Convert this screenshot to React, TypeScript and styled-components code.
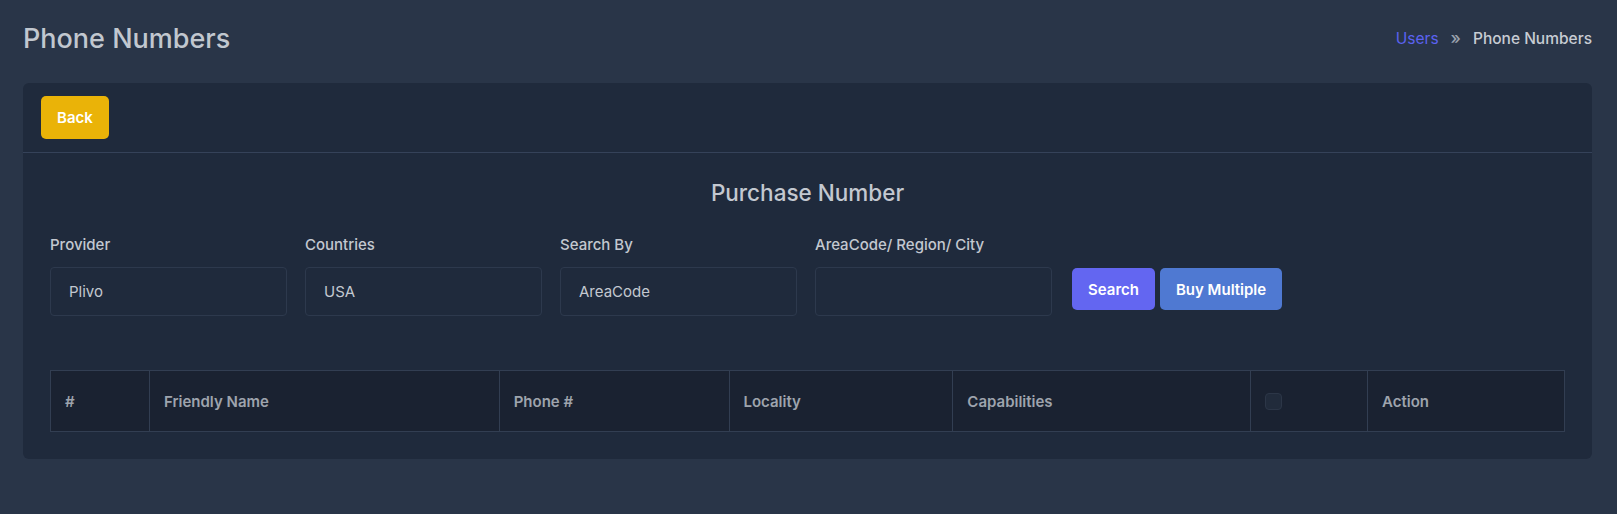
import React from 'react'
import styled, { createGlobalStyle } from 'styled-components'

const GlobalStyle = createGlobalStyle`
  html, body {
    margin: 0;
    padding: 0;
    background: #293548;
  }
  body {
    font-family: 'Inter', 'Noto Sans', sans-serif;
    color: #c3c8d0;
  }
  * {
    box-sizing: border-box;
  }
`

const Page = styled.div`
  min-height: 514px;
  padding: 0 25px 22px 23px;
  background: #293548;
`

const TopBar = styled.div`
  display: flex;
  align-items: center;
  justify-content: space-between;
  height: 83px;
  padding-bottom: 6px;
`

const PageTitle = styled.h1`
  margin: 0;
  font-size: 27px;
  font-weight: 500;
  color: #c1c7cf;
`

const Breadcrumb = styled.div`
  display: flex;
  align-items: center;
  gap: 12px;
  font-size: 15.5px;
  font-weight: 500;
`

const CrumbLink = styled.a`
  color: #5b62f0;
  font-weight: 400;
  text-decoration: none;
`

const CrumbSep = styled.span`
  color: #9aa2ae;
  font-size: 17px;
  line-height: 1;
`

const CrumbCurrent = styled.span`
  color: #c7ccd3;
`

const Card = styled.div`
  background: #1f2a3c;
  border-radius: 6px;
`

const CardHeader = styled.div`
  display: flex;
  align-items: center;
  height: 70px;
  padding: 0 18px;
  border-bottom: 1px solid #354259;
`

const Button = styled.button<{ $bg: string; $h?: number }>`
  height: ${(p) => p.$h ?? 43}px;
  padding: 0 16px;
  border: none;
  border-radius: 5px;
  background: ${(p) => p.$bg};
  color: #ffffff;
  font-family: 'Inter', 'Noto Sans', sans-serif;
  font-size: 15px;
  font-weight: 600;
  cursor: pointer;
`

const CardBody = styled.div`
  padding: 24px 27px 27px 27px;
`

const SectionTitle = styled.h2`
  margin: 0;
  text-align: center;
  font-size: 22.5px;
  font-weight: 500;
  line-height: 32px;
  color: #c3c8d0;
`

const FormRow = styled.div`
  display: flex;
  gap: 18px;
  margin-top: 26px;
`

const Field = styled.div`
  display: flex;
  flex-direction: column;
  width: 237px;
`

const Label = styled.label`
  font-size: 15px;
  font-weight: 500;
  line-height: 20px;
  color: #c3c8d0;
  margin-bottom: 12px;
`

const Input = styled.div`
  height: 49px;
  display: flex;
  align-items: center;
  padding: 0 18px;
  border: 1px solid #2d394d;
  border-radius: 4px;
  background: #1f2a3c;
  font-size: 15px;
  color: #c3c8d0;
`

const Actions = styled.div`
  display: flex;
  gap: 5px;
  margin-top: 33px;
  margin-left: 2px;
  align-self: flex-start;
`

const Table = styled.table`
  width: 100%;
  margin-top: 54px;
  border-collapse: collapse;
  background: #1a2231;
`

const Th = styled.th<{ $w: number }>`
  width: ${(p) => p.$w}px;
  height: 61px;
  padding: 0 14px;
  border: 1px solid #323e52;
  text-align: left;
  font-size: 15px;
  font-weight: 600;
  color: #9ea4ad;
`

const CheckBox = styled.span`
  display: inline-block;
  width: 17px;
  height: 17px;
  margin-top: 5px;
  border: 1px solid #2c3647;
  border-radius: 4px;
  background: #212b3b;
`

const columns = [
  { label: '#', w: 99 },
  { label: 'Friendly Name', w: 350 },
  { label: 'Phone #', w: 230 },
  { label: 'Locality', w: 224 },
  { label: 'Capabilities', w: 298 },
  { label: '', w: 117, check: true },
  { label: 'Action', w: 197 },
]

const fields = [
  { label: 'Provider', value: 'Plivo' },
  { label: 'Countries', value: 'USA' },
  { label: 'Search By', value: 'AreaCode' },
  { label: 'AreaCode/ Region/ City', value: '' },
]

export default function App() {
  return (
    <Page>
      <GlobalStyle />
      <TopBar>
        <PageTitle>Phone Numbers</PageTitle>
        <Breadcrumb>
          <CrumbLink href="#">Users</CrumbLink>
          <CrumbSep>»</CrumbSep>
          <CrumbCurrent>Phone Numbers</CrumbCurrent>
        </Breadcrumb>
      </TopBar>
      <Card>
        <CardHeader>
          <Button $bg="#eab308">Back</Button>
        </CardHeader>
        <CardBody>
          <SectionTitle>Purchase Number</SectionTitle>
          <FormRow>
            {fields.map((f) => (
              <Field key={f.label}>
                <Label>{f.label}</Label>
                <Input>{f.value}</Input>
              </Field>
            ))}
            <Actions>
              <Button $bg="#6366f1" $h={42}>Search</Button>
              <Button $bg="#4f79d2" $h={42}>Buy Multiple</Button>
            </Actions>
          </FormRow>
          <Table>
            <thead>
              <tr>
                {columns.map((c, i) => (
                  <Th key={i} $w={c.w}>
                    {c.check ? <CheckBox /> : c.label}
                  </Th>
                ))}
              </tr>
            </thead>
          </Table>
        </CardBody>
      </Card>
    </Page>
  )
}
